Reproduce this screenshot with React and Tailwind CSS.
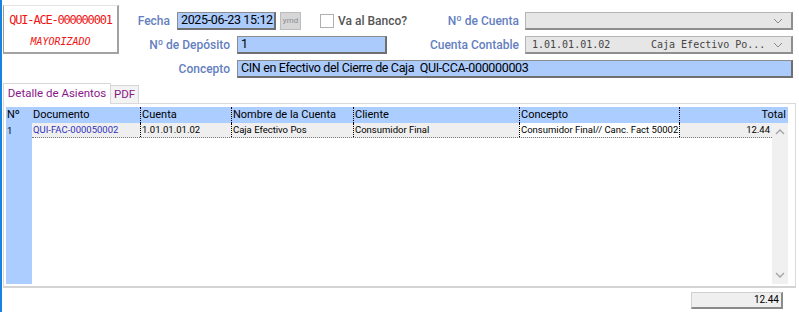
import React from 'react';

const ui = { fontFamily: 'Roboto, "Noto Sans", sans-serif' };
const mono = { fontFamily: '"DejaVu Sans Mono", "Liberation Mono", monospace' };

const Chevron = () => (
  <svg width="10" height="6" viewBox="0 0 10 6" className="shrink-0">
    <path d="M1 1 L5 5 L9 1" fill="none" stroke="#8a8a8a" strokeWidth="1" />
  </svg>
);

const Select = ({ children }) => (
  <div className="ml-[6px] w-[268px] h-[18px] flex items-center bg-[#e6e6e6] border border-[#b4b4b4] border-r-[#8e8e8e] border-b-[#8e8e8e] border-b-2 border-r-2 pl-[6px] pr-[8px]">
    <div className="flex-1 flex items-center text-[10px] text-[#444] whitespace-nowrap" style={mono}>
      {children}
    </div>
    <Chevron />
  </div>
);

const BlueInput = ({ className, children }) => (
  <div
    className={`h-[18px] bg-[#aacbfc] border border-[#8d8d8d] border-r-2 border-b-2 border-r-[#6f6f6f] border-b-[#6f6f6f] flex items-center pl-[3px] text-[12.5px] tracking-[-0.35px] text-black whitespace-nowrap overflow-hidden ${className}`}
  >
    {children}
  </div>
);

const Label = ({ className, children }) => (
  <div className={`text-[12px] font-medium text-[#6480c0] text-right whitespace-nowrap ${className}`}>{children}</div>
);

const cols = [
  { label: 'Documento', w: 'w-[108px]' },
  { label: 'Cuenta', w: 'w-[91px]' },
  { label: 'Nombre de la Cuenta', w: 'w-[122px]' },
  { label: 'Cliente', w: 'w-[166px]' },
  { label: 'Concepto', w: 'w-[160px]' },
];

const row = ['QUI-FAC-000050002', '1.01.01.01.02', 'Caja Efectivo Pos', 'Consumidor Final', 'Consumidor Final// Canc. Fact 50002 Ef'];

export default function App() {
  return (
    <div className="w-[799px] h-[312px] bg-white border-l-2 border-[#1583df] overflow-hidden" style={ui}>
      {/* Cabecera */}
      <div className="flex">
        <div className="ml-[1px] mt-[5px] w-[116px] h-[49px] bg-white border-l border-t border-l-[#9a9a9a] border-t-[#e4e4e4] border-r-2 border-b-2 border-r-[#a2a2a2] border-b-[#a2a2a2] flex flex-col items-center">
          <div className="mt-[8px] text-[12px] text-[#f01414] tracking-[-1.2px] leading-none" style={mono}>
            QUI-ACE-000000001
          </div>
          <div className="mt-[11px] text-[10px] italic text-[#f01414] leading-none" style={mono}>
            MAYORIZADO
          </div>
        </div>

        <div className="flex-1 flex flex-col gap-[6px] pt-[12px] pr-[6px]">
          <div className="flex items-center h-[18px]">
            <Label className="w-[51px]">Fecha</Label>
            <BlueInput className="ml-[7px] w-[99px]">2025-06-23 15:12</BlueInput>
            <div className="ml-[4px] w-[21px] h-[18px] bg-[#d6d6d6] border border-[#bcbcbc] flex items-center justify-center text-[8px] text-[#8c8c8c]">
              ymd
            </div>
            <div className="ml-[19px] w-[14px] h-[14px] bg-white border border-[#b0b0b0]" />
            <div className="ml-[4px] text-[12px] font-medium text-[#555]">Va al Banco?</div>
            <Label className="flex-1">Nº de Cuenta</Label>
            <Select />
          </div>

          <div className="flex items-center h-[18px]">
            <Label className="w-[111px]">Nº de Depósito</Label>
            <BlueInput className="ml-[7px] w-[150px]">1</BlueInput>
            <Label className="flex-1">Cuenta Contable</Label>
            <Select>
              <span className="w-[119px]">1.01.01.01.02</span>
              <span>Caja Efectivo Po...</span>
            </Select>
          </div>

          <div className="flex items-center h-[18px]">
            <Label className="w-[111px]">Concepto</Label>
            <BlueInput className="ml-[7px] flex-1">CIN en Efectivo del Cierre de Caja&nbsp; QUI-CCA-000000003</BlueInput>
          </div>
        </div>
      </div>

      {/* Pestañas */}
      <div className="flex items-end ml-[1px] mt-[4px] h-[21px]">
        <div className="h-[21px] w-[108px] bg-white border border-b-0 border-[#d6d6d6] text-[11.5px] text-[#8a178a] flex items-center justify-center relative top-[1px]">
          Detalle de Asientos
        </div>
        <div className="h-[18px] w-[28px] bg-[#f3f3f3] border border-l-0 border-b-0 border-[#d6d6d6] text-[11.5px] text-[#8a178a] flex items-center justify-center">
          PDF
        </div>
      </div>

      {/* Panel */}
      <div className="ml-[1px] w-[793px] h-[185px] border border-[#d9d9d9] border-b-2 border-b-[#d4d4d4] pt-[3px] pl-[2px] pr-[7px] pb-[2px]">
        <div className="flex h-full">
          <div className="w-[26px] h-full bg-[#abcdff] flex flex-col text-[11px]">
            <div className="h-[16px] leading-[16px] pl-[1px]">Nº</div>
            <div className="h-[15px] leading-[15px] pl-[1px] text-[9.5px]">1</div>
          </div>
          <div className="flex-1 flex flex-col">
            <div className="flex h-[16px] bg-[#abcdff] text-[11px] text-black leading-[16px]">
              {cols.map((c, i) => (
                <div key={c.label} className={`${c.w} pl-[1px] whitespace-nowrap ${i > 0 ? 'border-l border-dotted border-black' : ''}`}>
                  {c.label}
                </div>
              ))}
              <div className="flex-1 border-l border-dotted border-black text-right pr-[2px]">Total</div>
            </div>
            <div className="flex flex-1">
              <div className="flex-1 flex flex-col">
                <div className="flex h-[15px] bg-[#efefef] text-[9.5px] leading-[14px] border-b border-dotted border-[#777]">
                  {cols.map((c, i) => (
                    <div
                      key={c.label}
                      className={`${c.w} pl-[1px] whitespace-nowrap overflow-hidden ${i > 0 ? 'border-l border-dotted border-black' : ''} ${i === 0 ? 'text-[#3030c0]' : 'text-black'} ${i === 4 ? 'bg-white' : ''}`}
                    >
                      {row[i]}
                    </div>
                  ))}
                  <div className="flex-1 border-l border-dotted border-black text-right pr-[2px]">12.44</div>
                </div>
              </div>
              <div className="w-[16px] bg-[#f0f0f0] flex flex-col items-center justify-between py-[6px]">
                <svg width="10" height="6" viewBox="0 0 10 6">
                  <path d="M1 5 L5 1 L9 5" fill="none" stroke="#a8a8a8" strokeWidth="1.5" />
                </svg>
                <svg width="10" height="6" viewBox="0 0 10 6">
                  <path d="M1 1 L5 5 L9 1" fill="none" stroke="#a8a8a8" strokeWidth="1.5" />
                </svg>
              </div>
            </div>
          </div>
        </div>
      </div>

      {/* Total */}
      <div className="flex justify-end pr-[16px] mt-[4px]">
        <div className="w-[92px] h-[17px] bg-[#efefef] border border-[#d0d0d0] border-r-2 border-b-2 border-r-[#8a8a8a] border-b-[#8a8a8a] text-[10px] text-black text-right pr-[2px] leading-[14px]">
          12.44
        </div>
      </div>
    </div>
  );
}
